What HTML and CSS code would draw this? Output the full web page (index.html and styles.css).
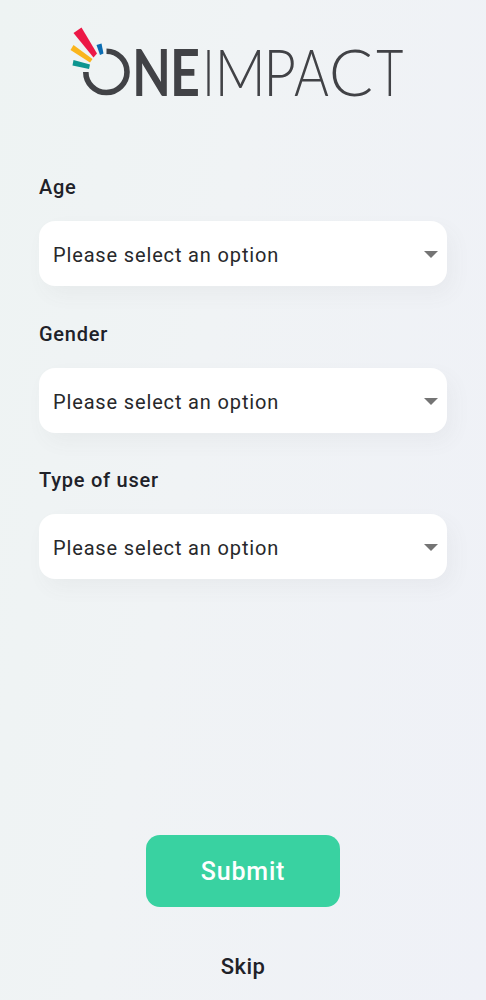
FILE: index.html
```html
<!DOCTYPE html>
<html lang="en">
<head>
    <meta charset="UTF-8">
    <meta name="viewport" content="width=device-width, initial-scale=1.0">
    <title>OneImpact</title>
    <link rel="stylesheet" href="styles.css">
</head>
<body>
    <div class="container">
        <div class="header">
            <svg class="logo" viewBox="0 0 334 72" role="img" aria-label="OneImpact">
                <polygon fill="#ec1846" points="3.5,5 11.5,-0.5 27,25.5 23.5,29.5"/>
                <polygon fill="#fab51c" points="3.5,17 22.5,31 20,34.5 0.5,22"/>
                <polygon fill="#0d9590" points="3.5,32 20,36.5 19,41 2.5,37.5"/>
                <polygon fill="#0b6db3" points="26.5,17 31.5,15.5 33.5,25.5 30,27"/>
                <path class="ring" d="M36.5 23.3A20.6 20.6 0 1 1 15.8 43.9"/>
                <text class="bold" transform="translate(62.2 67.8) scale(.77 1)">N</text>
                <text class="bold" transform="translate(99.9 67.8) scale(.8 1)">E</text>
                <text class="thin" transform="translate(132.7 67.8) scale(.68 1)">I</text>
                <text class="thin" transform="translate(144.4 67.8) scale(.87 1)">M</text>
                <text class="thin" transform="translate(193.3 67.8) scale(.87 1)">P</text>
                <text class="thin" transform="translate(224 67.8) scale(.82 1)">A</text>
                <text class="thin" transform="translate(258.7 67.8) scale(1.01 1)">C</text>
                <text class="thin" transform="translate(306.3 67.8) scale(.72 1)">T</text>
            </svg>
        </div>
        <form>
            <div class="campo">
                <label for="age">Age</label>
                <select id="age">
                    <option>Please select an option</option>
                </select>
            </div>
            <div class="campo">
                <label for="gender">Gender</label>
                <select id="gender">
                    <option>Please select an option</option>
                </select>
            </div>
            <div class="campo">
                <label for="type">Type of user</label>
                <select id="type">
                    <option>Please select an option</option>
                </select>
            </div>
            <button type="button" class="submit">Submit</button>
            <button type="button" class="skip">Skip</button>
        </form>
    </div>
</body>
</html>
```
FILE: styles.css
```css
*{
    box-sizing: border-box;
}
body{
    margin: 0;
    font-family: 'Roboto', sans-serif;
    color: #202128;
    background: linear-gradient(100deg, #eef3f3 0%, #f0f3f5 40%, #eff1f7 100%);
}
.container{
    height: 1000px;
    padding: 28px 39px 0;
    overflow: hidden;
}
.header{
    height: 145px;
    padding-left: 31px;
}
.logo{
    display: block;
    width: 334px;
    height: 72px;
    overflow: visible;
}
.logo text{
    font-family: 'Lato', sans-serif;
    font-size: 65px;
    fill: #414246;
}
.logo .bold{
    font-weight: 700;
}
.logo .thin{
    font-weight: 300;
}
.ring{
    fill: none;
    stroke: #414246;
    stroke-width: 5.6;
}
form{
    display: flex;
    flex-direction: column;
}
.campo{
    height: 146.6px;
}
label{
    display: block;
    height: 48px;
    line-height: 28px;
    font-size: 20px;
    font-weight: 500;
    letter-spacing: 0.75px;
}
select{
    display: block;
    appearance: none;
    width: 408px;
    height: 65px;
    padding: 3px 14px 0;
    border: none;
    border-radius: 16px;
    font-family: inherit;
    font-size: 20px;
    letter-spacing: 0.85px;
    color: #27282b;
    background-color: #fff;
    background-image: url("data:image/svg+xml,%3Csvg xmlns='http://www.w3.org/2000/svg' viewBox='0 0 14 7'%3E%3Cpath d='M0 0h14L7 7z' fill='%23747474'/%3E%3C/svg%3E");
    background-repeat: no-repeat;
    background-position: right 9px top 30px;
    background-size: 14px 7px;
    box-shadow: 6px 9px 20px rgba(90, 95, 90, 0.05);
}
button{
    align-self: center;
    border: none;
    font-family: inherit;
    font-weight: 500;
}
.submit{
    width: 194px;
    height: 72px;
    margin-top: 222px;
    padding-top: 3px;
    border-radius: 14px;
    font-size: 25px;
    letter-spacing: 0.8px;
    color: #fff;
    background-color: #39d2a1;
}
.skip{
    margin-top: 44px;
    padding: 0;
    line-height: 32px;
    font-size: 22px;
    letter-spacing: 0.4px;
    color: #202128;
    background: none;
}
```
